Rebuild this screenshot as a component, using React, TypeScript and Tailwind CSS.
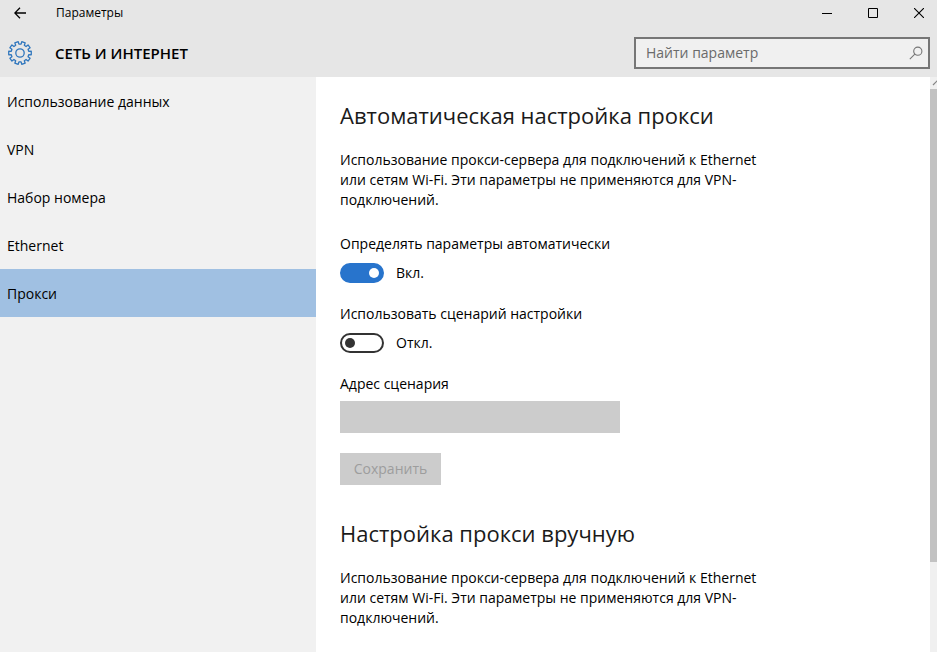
import React, { useState } from 'react';

const navItems = ['Использование данных', 'VPN', 'Набор номера', 'Ethernet', 'Прокси'];

const proxyInfo =
  'Использование прокси-сервера для подключений к Ethernet или сетям Wi-Fi. Эти параметры не применяются для VPN-подключений.';

// Outline of a cog with ten teeth, centred on 0,0
const gearPath = () => {
  const teeth = 10;
  const points: string[] = [];
  for (let i = 0; i < teeth; i++) {
    const mid = (i * 360) / teeth;
    [[-11, 8.9], [-9, 11.4], [9, 11.4], [11, 8.9]].forEach(([offset, r]) => {
      const a = ((mid + offset) * Math.PI) / 180;
      points.push(`${(r * Math.cos(a)).toFixed(2)} ${(r * Math.sin(a)).toFixed(2)}`);
    });
  }
  return `M${points.join('L')}Z`;
};

const GearIcon = () => (
  <svg className="w-[26px] h-[26px]" viewBox="-13 -13 26 26" fill="none" stroke="#2f76bd" strokeWidth="1.3" strokeLinejoin="round">
    <path d={gearPath()} />
    <circle r="4.2" />
  </svg>
);

const TitleBar = () => (
  <div className="flex h-[26px] items-center">
    <button aria-label="Назад" className="flex w-10 h-full items-center justify-center">
      <svg className="w-3 h-3" viewBox="0 0 12 12" fill="none" stroke="#000" strokeWidth="1.3">
        <path d="M12 6H.8M6 .8.8 6 6 11.2" />
      </svg>
    </button>
    <span className="ml-4 text-xs">Параметры</span>
    <div className="ml-auto flex h-full gap-[10px]">
      <button aria-label="Свернуть" className="flex w-9 items-center justify-center">
        <svg className="w-[10px] h-[10px]" viewBox="0 0 10 10" stroke="#000"><path d="M0 5.5h10" /></svg>
      </button>
      <button aria-label="Развернуть" className="flex w-9 items-center justify-center">
        <svg className="w-[10px] h-[10px]" viewBox="0 0 10 10" fill="none" stroke="#000"><path d="M.5.5h9v9h-9z" /></svg>
      </button>
      <button aria-label="Закрыть" className="flex w-9 items-center justify-center">
        <svg className="w-[10px] h-[10px]" viewBox="0 0 10 10" stroke="#000" strokeWidth="1.1"><path d="M0 0l10 10M10 0 0 10" /></svg>
      </button>
    </div>
  </div>
);

const Header = () => (
  <header className="bg-[#e6e6e6]">
    <TitleBar />
    <div className="flex items-center justify-between pr-[7px] pt-[11px] pb-2">
      <div className="flex items-center">
        <span className="flex w-10 justify-center"><GearIcon /></span>
        <h1 className="ml-[15px] text-[15px] font-semibold">СЕТЬ И ИНТЕРНЕТ</h1>
      </div>
      <label className="flex h-8 w-[296px] items-center border-2 border-[#767676] bg-[#f0f0f0] pl-[10px] pr-[5px]">
        <input
          type="text"
          aria-label="Найти параметр"
          placeholder="Найти параметр"
          className="min-w-0 flex-1 bg-transparent text-sm outline-none placeholder:text-[#6a6a6a]"
        />
        <svg className="w-[14px] h-[14px]" viewBox="0 0 14 14" fill="none" stroke="#767676" strokeWidth="1.1">
          <circle cx="8.8" cy="5.2" r="4.1" />
          <path d="M5.8 8.2.8 13.2" />
        </svg>
      </label>
    </div>
  </header>
);

interface ToggleProps {
  id: string;
  label: string;
  checked: boolean;
  onChange: (value: boolean) => void;
}

const Toggle = ({ id, label, checked, onChange }: ToggleProps) => (
  <div>
    <label htmlFor={id} className="block">{label}</label>
    <div className="mt-2 flex h-[22px] items-center gap-3">
      <span className="relative flex h-5 w-11">
        <input
          id={id}
          type="checkbox"
          role="switch"
          checked={checked}
          onChange={(e) => onChange(e.target.checked)}
          className="peer h-5 w-11 appearance-none rounded-full border-2 border-[#333333] checked:border-[#2874cc] checked:bg-[#2874cc]"
        />
        <span className="pointer-events-none absolute left-[5px] top-[5px] h-[10px] w-[10px] rounded-full bg-[#333333] peer-checked:left-[29px] peer-checked:bg-white" />
      </span>
      <span>{checked ? 'Вкл.' : 'Откл.'}</span>
    </div>
  </div>
);

export default function App() {
  const [active, setActive] = useState('Прокси');
  const [autoDetect, setAutoDetect] = useState(true);
  const [useScript, setUseScript] = useState(false);

  return (
    <div className="flex min-h-screen flex-col bg-white font-['Open_Sans','Noto_Sans',sans-serif] text-sm leading-5 text-black">
      <Header />
      <div className="flex flex-1">
        <nav className="w-[316px] shrink-0 bg-[#f1f1f1]">
          {navItems.map((item) => (
            <button
              key={item}
              onClick={() => setActive(item)}
              className={`block h-12 w-full px-[7px] pt-0.5 text-left ${item === active ? 'bg-[#a0c0e2]' : ''}`}
            >
              {item}
            </button>
          ))}
        </nav>

        <main className="flex-1 px-6 pt-[22px]">
          <h2 className="text-[22px] leading-8 font-normal text-[#1a1a1a]">Автоматическая настройка прокси</h2>
          <p className="mt-[19px] max-w-[430px]">{proxyInfo}</p>

          <div className="mt-6 flex flex-col gap-5">
            <Toggle id="auto" label="Определять параметры автоматически" checked={autoDetect} onChange={setAutoDetect} />
            <Toggle id="script" label="Использовать сценарий настройки" checked={useScript} onChange={setUseScript} />
            <div>
              <label htmlFor="address" className="block">Адрес сценария</label>
              <input id="address" type="text" disabled={!useScript} className="mt-[7px] block h-8 w-[280px] bg-[#cccccc] px-2" />
            </div>
            <button disabled={!useScript} className="h-8 w-[101px] bg-[#cccccc] text-[#9d9d9d]">Сохранить</button>
          </div>

          <h2 className="mt-8 text-[22px] leading-8 font-normal text-[#1a1a1a]">Настройка прокси вручную</h2>
          <p className="mt-[19px] max-w-[430px]">{proxyInfo}</p>
        </main>

        {/* Scroll bar */}
        <div className="flex w-[7px] shrink-0 flex-col overflow-hidden bg-[#f0f0f0]">
          <svg className="h-3 w-[14px] shrink-0" viewBox="0 0 14 12" fill="none" stroke="#858585" strokeWidth="1.2">
            <path d="M3 8l4-4 4 4" />
          </svg>
          <div className="flex flex-1 flex-col">
            <div className="flex-[84] bg-[#c2c2c2]" />
            <div className="flex-[16]" />
          </div>
        </div>
      </div>
    </div>
  );
}
